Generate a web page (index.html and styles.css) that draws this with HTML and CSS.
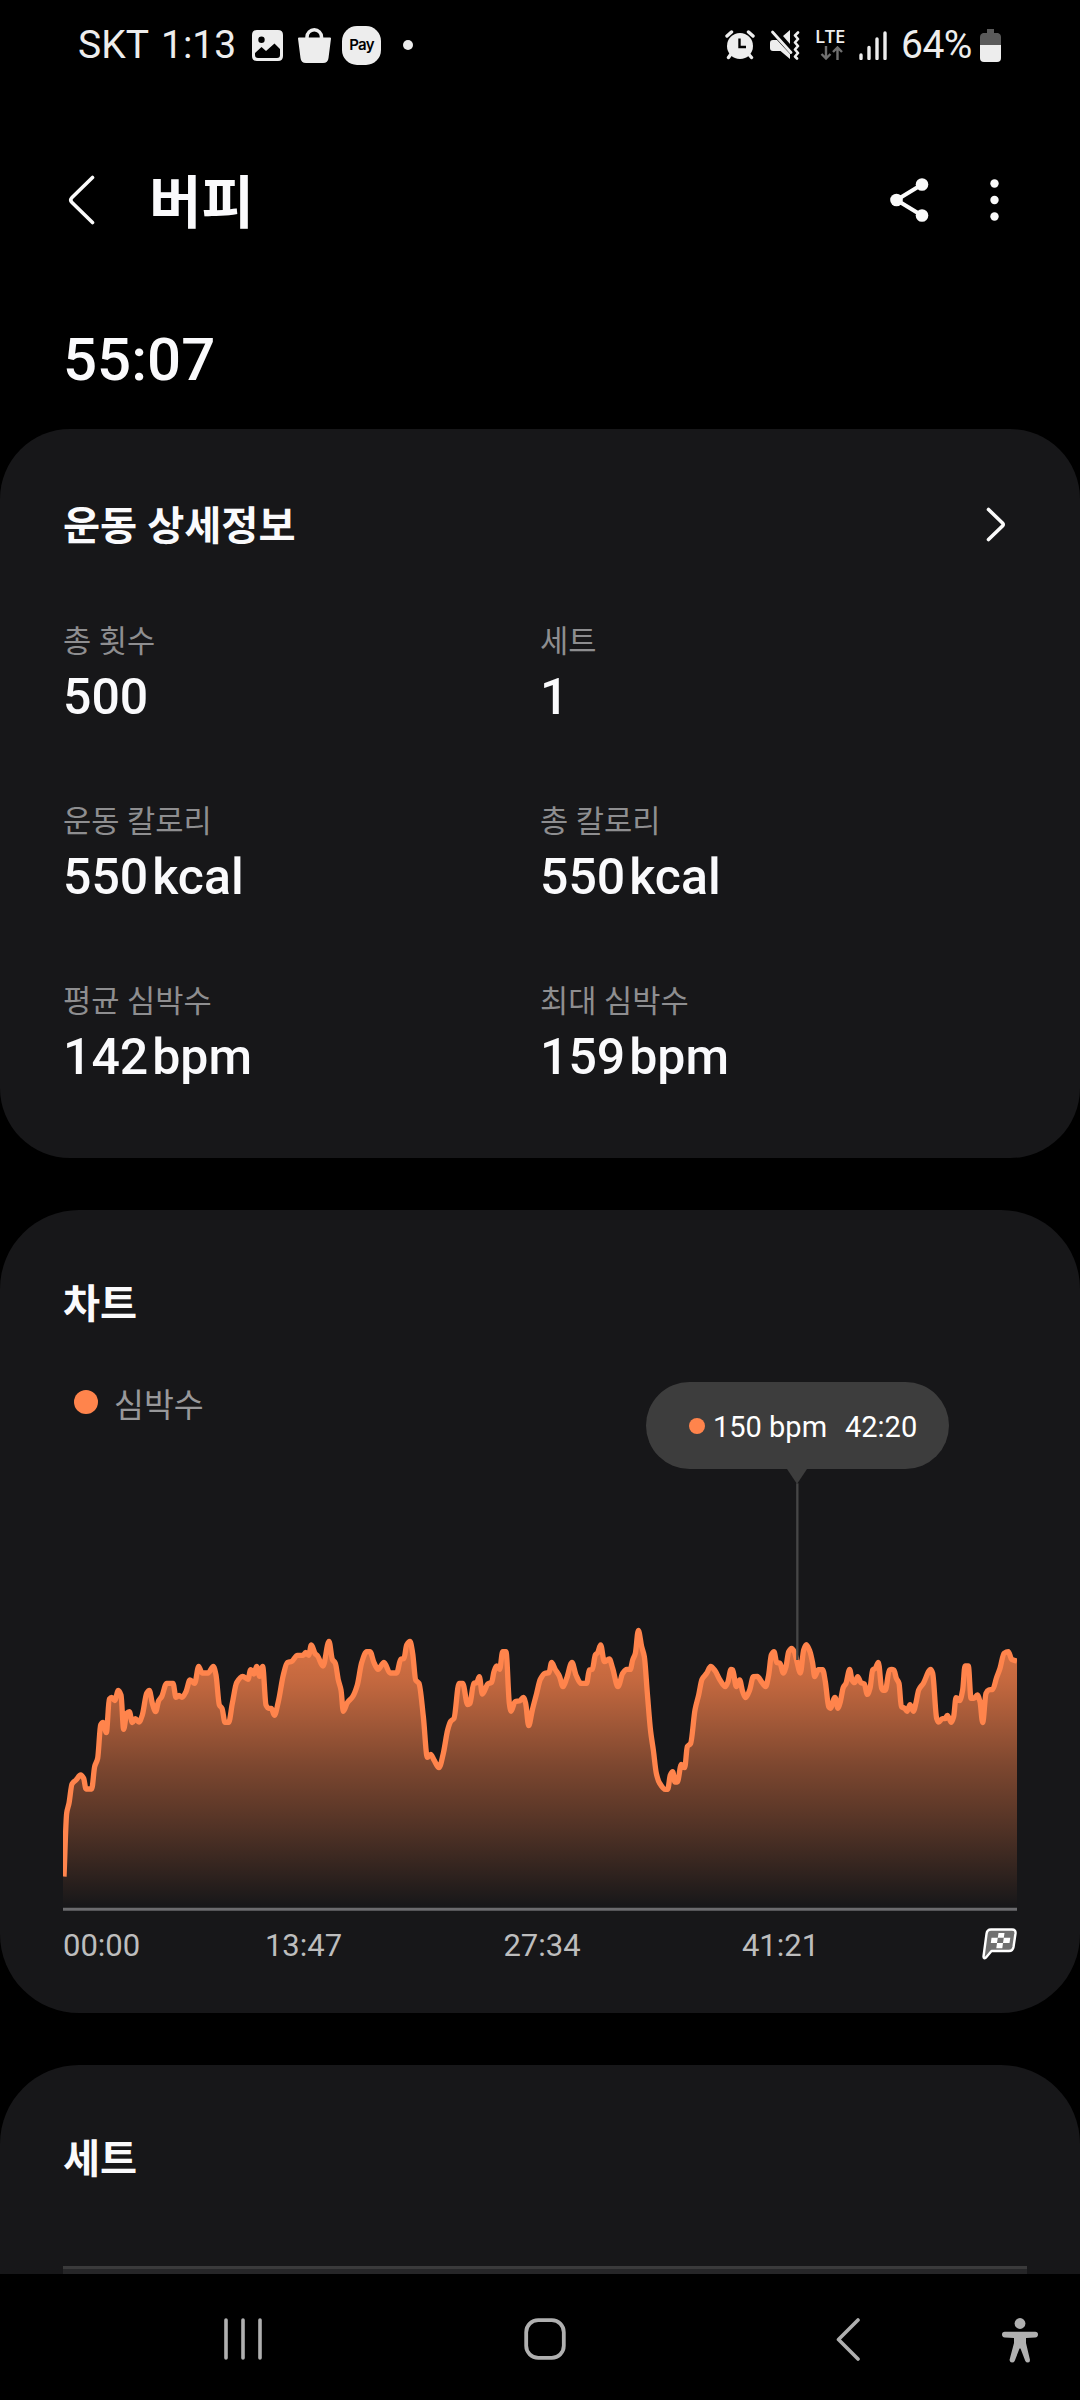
FILE: index.html
```html
<!DOCTYPE html>
<html lang="ko">
<head>
<meta charset="utf-8">
<title>버피</title>
<link rel="stylesheet" href="styles.css">
</head>
<body>
<div class="screen">
  <header class="status">
    <span class="status-text carrier">SKT</span>
    <span class="status-text clock">1:13</span>
    <svg class="st-image" width="31" height="31" viewBox="0 0 31 31"><path fill="#ededed" fill-rule="evenodd" d="M5 0H26Q31 0 31 5V26Q31 31 26 31H5Q0 31 0 26V5Q0 0 5 0ZM9.5 6.5A3.2 3.2 0 1 0 9.500 12.900A3.200 3.200 0 1 0 9.500 6.500ZM3 23V25Q3 28 6 28H25Q28 28 28 25V19L22.500 13.500L14 21L9.500 17Z"/></svg>
    <svg class="st-bag" width="33" height="35" viewBox="0 0 33 35"><path fill="none" stroke="#ededed" stroke-width="3.500" d="M9 12V9A7.200 7.200 0 0 1 23.500 9V12"/><path fill="#ededed" d="M1 9.500H32Q33 9.500 33 10.500L30.500 30Q30 35 25 35H8Q3 35 2.500 30L0 10.500Q0 9.500 1 9.500Z"/></svg>
    <span class="st-pay">Pay</span>
    <span class="st-dot"></span>
    <span class="spacer"></span>
    <svg class="st-alarm" width="30" height="30" viewBox="0 0 30 30"><g stroke="#ededed" stroke-width="3.400" stroke-linecap="round"><path d="M2 6L6.500 2M23.500 2L28 6M6 24L3.500 27.500M23.500 24L26.500 27.500"/></g><circle cx="15" cy="16" r="13" fill="#ededed"/><path d="M14.500 8.500V17H21" fill="none" stroke="#000" stroke-width="2.400"/></svg>
    <svg class="st-mute" width="30" height="30" viewBox="0 0 30 30"><path fill="#ededed" d="M3 10H7L20 24V29L10.500 21H3Q0 21 0 18V13Q0 10 3 10ZM13 6L20 0V14Z"/><path d="M2.500 2L21 22.500" stroke="#ededed" stroke-width="2.800" stroke-linecap="round"/><path d="M28 2.500L25 5.500L28 9L25 12.500L28 16L25 19.500L28 23L25 26.500L27 28.500" fill="none" stroke="#ededed" stroke-width="2.600" stroke-linecap="round" stroke-linejoin="round"/></svg>
    <span class="st-lte"><b>LTE</b><svg width="24" height="14" viewBox="0 0 24 14"><path d="M6 0V12M1.500 8L6 12.500L10.500 8M17.500 14V2M13 6L17.500 1.500L22 6" fill="none" stroke="#707070" stroke-width="2.400"/></svg></span>
    <svg class="st-signal" width="28" height="29" viewBox="0 0 28 29"><path d="M2 24V27.500M10 16.500V27.500M18 8V27.500M26 2V27.500" stroke="#ededed" stroke-width="3.400" stroke-linecap="round"/></svg>
    <span class="status-text battery-text">64%</span>
    <svg class="st-battery" width="21" height="33" viewBox="0 0 21 33"><path fill="#5a5a5a" d="M7 0H14V4H18Q21 5 21 8V16H0V8Q0 5 3 4H7Z"/><path fill="#ededed" d="M0 16H21V29Q21 33 17 33H4Q0 33 0 29Z"/></svg>
  </header>

  <div class="toolbar">
    <svg class="tb-back" width="27" height="50" viewBox="0 0 27 50"><path d="M24.500 2.500L4 22.500Q1.500 25 4 27.500L24.500 47.500" fill="none" stroke="#fafafa" stroke-width="3.600" stroke-linecap="round"/></svg>
    <h1 class="title">버피</h1>
    <span class="spacer"></span>
    <svg class="tb-share" width="39" height="44" viewBox="0 0 39 44"><path d="M32 6.500L6.500 22L32 37.500" fill="none" stroke="#fafafa" stroke-width="4"/><g fill="#fafafa"><circle cx="32" cy="6.500" r="6.300"/><circle cx="6.500" cy="22" r="6.300"/><circle cx="32" cy="37.500" r="6.300"/></g></svg>
    <svg class="tb-more" width="9" height="42" viewBox="0 0 9 42"><g fill="#fafafa"><circle cx="4.500" cy="4.500" r="4.200"/><circle cx="4.500" cy="21" r="4.200"/><circle cx="4.500" cy="37.500" r="4.200"/></g></svg>
  </div>

  <div class="duration">55:07</div>

  <main class="cards">
    <section class="card card-details">
      <div class="card-head">
        <h2>운동 상세정보</h2>
        <svg width="20" height="35" viewBox="0 0 20 35"><path d="M2.500 2.500L16.500 16Q18 17.500 16.500 19L2.500 32.500" fill="none" stroke="#fafafa" stroke-width="3.600" stroke-linecap="round"/></svg>
      </div>
      <dl class="stats">
        <div class="stat"><dt>총 횟수</dt><dd>500</dd></div>
        <div class="stat"><dt>세트</dt><dd>1</dd></div>
        <div class="stat"><dt>운동 칼로리</dt><dd>550<span class="unit">kcal</span></dd></div>
        <div class="stat"><dt>총 칼로리</dt><dd>550<span class="unit">kcal</span></dd></div>
        <div class="stat"><dt>평균 심박수</dt><dd>142<span class="unit">bpm</span></dd></div>
        <div class="stat"><dt>최대 심박수</dt><dd>159<span class="unit">bpm</span></dd></div>
      </dl>
    </section>

    <section class="card card-chart">
      <div class="card-head"><h2>차트</h2></div>
      <div class="legend"><span class="legend-dot"></span>심박수</div>
      <div class="plot">
        <svg class="plot-svg" width="954" height="530" viewBox="0 -654 2862 1590">
          <defs>
            <linearGradient id="heat" gradientUnits="userSpaceOnUse" x1="0" y1="90" x2="0" y2="920">
              <stop offset="0" stop-color="#ff844c" stop-opacity=".87"/>
              <stop offset=".19" stop-color="#ff844c" stop-opacity=".74"/>
              <stop offset=".49" stop-color="#ff844c" stop-opacity=".44"/>
              <stop offset=".73" stop-color="#ff844c" stop-opacity=".24"/>
              <stop offset="1" stop-color="#ff844c" stop-opacity="0"/>
            </linearGradient>
          </defs>
          <path id="area" fill="url(#heat)"/>
          <path id="line" fill="none" stroke="#ff844c" stroke-width="16" stroke-linejoin="round"/>
          <path d="M2203 -350V180" stroke="#464646" stroke-width="7"/>
          <path d="M0 927.500H2862" stroke="#6b6b6e" stroke-width="9"/>
        </svg>
        <div class="tooltip"><span class="tooltip-dot"></span><span class="tooltip-value">150 bpm</span><span>42:20</span></div>
      </div>
      <div class="axis">
        <span>00:00</span><span>13:47</span><span>27:34</span><span>41:21</span>
        <svg width="35" height="33" viewBox="0 0 35 33"><path d="M9 1.500H30Q34 1.500 33.500 5.500L31.500 19Q30.800 23 27 23H9.500L4 29.500Q1.500 31.500 1.500 28.500L4.500 6Q5 1.500 9 1.500Z" fill="#707070" stroke="#fff" stroke-width="2.400" stroke-linejoin="round"/><g fill="#fff"><path d="M16.500 5H22.500L21.800 9.800H15.800ZM9.500 9.800H15.800L15 15H8.800ZM21.800 9.800H28.300L27.500 15H21ZM15 15H21L20.300 20.300H14.300Z"/></g></svg>
      </div>
    </section>

    <section class="card card-sets">
      <div class="card-head"><h2>세트</h2></div>
      <div class="table-top"></div>
    </section>
  </main>

  <nav class="navbar">
    <svg width="38" height="42" viewBox="0 0 38 42"><path d="M2 2V40M19 2V40M36 2V40" stroke="#b0b0b0" stroke-width="3.600" stroke-linecap="round"/></svg>
    <svg class="nav-home" width="42" height="42" viewBox="0 0 42 42"><rect x="2.200" y="2.200" width="37.600" height="37.600" rx="12" fill="none" stroke="#b0b0b0" stroke-width="3.800"/></svg>
    <svg width="24" height="43" viewBox="0 0 24 43"><path d="M22 2L2.500 21.500L22 41" fill="none" stroke="#b0b0b0" stroke-width="3.600" stroke-linecap="round" stroke-linejoin="round"/></svg>
    <svg class="nav-access" width="36" height="45" viewBox="0 0 36 45"><g fill="#b0b0b0"><circle cx="18" cy="5.500" r="5.400"/><path d="M2.800 13.800H33.200Q36 13.800 36 16.600T33.200 19.400L24 20V25L28 42Q28 44.500 26 44.500T23.300 43L18.500 30.500H17.500L12.700 43Q12 44.500 10 44.500T7.500 42L12 25V20L2.800 19.400Q0 19.400 0 16.600T2.800 13.800Z"/></g></svg>
  </nav>
</div>
<script src="chart.js"></script>
</body>
</html>
```
FILE: styles.css
```css
* { box-sizing: border-box; margin: 0; padding: 0; }
body {
  background: #000;
  color: #fafafc;
  font-family: Roboto, "Noto Sans CJK KR", sans-serif;
}
svg { display: block; flex: none; }
.screen {
  width: 1080px;
  height: 2400px;
  display: flex;
  flex-direction: column;
  overflow: hidden;
}
.spacer { flex: 1; }

/* Status bar */
.status {
  flex: none;
  height: 90px;
  padding: 0 79px 0 78px;
  display: flex;
  align-items: center;
  color: #ededed;
}
.status-text { font-size: 39px; line-height: 44px; white-space: nowrap; }
.carrier { width: 83px; }
.clock { width: 91px; }
.st-bag { margin-left: 15px; }
.st-pay {
  margin-left: 11px;
  width: 39px;
  height: 39px;
  border-radius: 15px;
  background: #ededed;
  color: #000;
  font: 600 15px/38px Inter, Roboto, sans-serif;
  letter-spacing: -.7px;
  text-align: center;
}
.st-dot { width: 10px; height: 10px; margin-left: 22px; border-radius: 50%; background: #ededed; }
.st-mute { margin-left: 15px; }
.st-lte { width: 32px; height: 32px; margin-left: 15px; display: flex; flex-direction: column; gap: 3px; }
.st-lte b { font: 600 18.500px/14px "Open Sans", sans-serif; letter-spacing: -.3px; }
.st-lte svg { margin-left: 5px; }
.st-signal { margin-left: 12px; }
.battery-text { margin-left: 14px; width: 79px; letter-spacing: -.5px; }

/* Title bar */
.toolbar {
  flex: none;
  height: 222px;
  padding: 0 81px 2px 68px;
  display: flex;
  align-items: center;
}
.title { margin-left: 54px; font-size: 57px; font-weight: 700; line-height: 80px; padding-top: 8px; }
.tb-more { margin-left: 61px; }

.duration {
  flex: none;
  height: 117px;
  padding: 8px 63px 0;
  font-size: 60px;
  font-weight: 500;
  line-height: 80px;
}

/* Cards */
.cards {
  flex: 1;
  min-height: 0;
  overflow: hidden;
  display: flex;
  flex-direction: column;
  gap: 52px;
}
.card { flex: none; background: #171719; border-radius: 79px; padding: 65px 63px 0; }
.card-details { height: 729px; padding-top: 68px; border-radius: 70px; }
.card-chart { height: 803px; }
.card-sets { height: 480px; }
.card-head {
  height: 60px;
  padding-right: 11px;
  display: flex;
  align-items: center;
  justify-content: space-between;
}
.card-head h2 { font-size: 40.300px; font-weight: 700; line-height: 60px; }
.card-head svg { margin-bottom: 6px; }

.stats { display: grid; grid-template-columns: 477px 477px; grid-auto-rows: 180px; margin-top: 63px; }
.stat dt { font-size: 30.700px; line-height: 44px; color: #8e8e90; }
.stat dd { font-size: 50px; font-weight: 500; line-height: 60px; margin-top: 3px; }
.unit { margin-left: 4px; }

/* Heart-rate chart */
.legend {
  height: 40px;
  margin-top: 47px;
  padding-left: 11px;
  display: flex;
  align-items: center;
  gap: 16px;
  font-size: 32.500px;
  color: #98989a;
}
.legend-dot { width: 24px; height: 24px; border-radius: 50%; background: #ff844c; }
.plot { position: relative; height: 530px; margin-top: -40px; }
.tooltip {
  position: absolute;
  left: 583px;
  top: 0;
  width: 303px;
  height: 87px;
  padding: 2px 0 0 43px;
  border-radius: 43.500px;
  background: #3d3d3d;
  color: #fff;
  display: flex;
  align-items: center;
  font-size: 29px;
  white-space: nowrap;
}
.tooltip::after {
  content: "";
  position: absolute;
  left: 141px;
  top: 86.500px;
  border: solid transparent;
  border-width: 15px 10.500px 0;
  border-top-color: #3d3d3d;
}
.tooltip-dot { width: 16px; height: 16px; margin: 0 8px 2px 0; border-radius: 50%; background: #ff844c; }
.tooltip-value { width: 132px; }
.axis {
  height: 67px;
  display: grid;
  grid-template-columns: 121.250px repeat(3, 238.500px) 1fr;
  align-items: center;
  font-size: 31px;
  color: #bdbdbd;
}
.axis span:not(:first-child) { text-align: center; }
.axis svg { justify-self: end; margin-bottom: 2px; }

.table-top { width: 964px; height: 60px; margin-top: 76px; background: #262628; border-top: 3px solid #3a3a3b; }

/* System navigation */
.navbar {
  flex: none;
  height: 126px;
  padding: 4px 0 0 92px;
  display: grid;
  grid-template-columns: repeat(3, 302.500px) 42px;
  align-items: center;
  justify-items: center;
}
.nav-home { margin-right: 2px; }
.nav-access { margin: 2px 2px 0 0; }
```
FILE: chart.js
```js
// Heart-rate samples as x,y pairs in plot units.
const samples = [
  3,830, 11,640, 18,610, 27,552, 39,540, 53,525, 62,535, 69,567, 86,567, 95,500, 104,475, 113,375, 120,367, 130,398,
  139,297, 146,292, 155,302, 166,271, 174,285, 182,388, 191,340, 199,335, 208,368, 217,356, 228,366, 238,345, 251,280,
  259,271, 268,310, 278,335, 287,302, 296,290, 311,250, 330,250, 339,292, 348,286, 357,292, 369,275, 381,240, 395,250,
  407,199, 417,219, 435,219, 451,199, 459,225, 469,315, 477,325, 486,367, 497,367, 508,310, 521,248, 539,229, 555,238,
  563,209, 573,222, 581,199, 590,229, 599,199, 609,315, 617,325, 625,325, 634,346, 646,305, 661,225, 673,188, 686,184,
  703,166, 721,166, 728,157, 737,166, 745,135, 756,160, 764,168, 780,198, 798,124, 808,178, 817,190, 826,240, 834,270,
  841,334, 853,308, 869,290, 883,255, 896,188, 911,155, 921,155, 933,188, 945,208, 963,187,
  981,219, 1001,219, 1013,178, 1023,175, 1031,135, 1041,124, 1049,160, 1058,240, 1068,250, 1081,350, 1093,472, 1103,463,
  1113,480, 1128,503, 1141,460, 1154,390, 1163,364, 1173,355, 1188,250, 1199,250, 1214,314, 1221,310, 1232,250, 1241,248,
  1249,230, 1258,282, 1275,251, 1286,247, 1293,215, 1301,198, 1310,208, 1319,155, 1329,155, 1339,310, 1344,334, 1356,305,
  1371,302, 1381,292, 1388,310, 1397,377, 1408,330, 1421,280, 1432,238, 1446,220, 1458,218, 1466,187, 1476,207, 1489,228,
  1500,260, 1511,235, 1527,187, 1539,225, 1554,250, 1571,250, 1579,210, 1588,208, 1597,165, 1604,158, 1613,135, 1624,185,
  1639,177, 1649,205, 1665,260, 1679,220, 1691,208, 1702,208, 1709,180, 1717,160, 1726,91, 1736,140, 1744,170, 1753,280,
  1763,395, 1771,450, 1780,520, 1789,548, 1807,568, 1814,568, 1822,525, 1829,515, 1836,546, 1843,546, 1855,493, 1865,503,
  1873,440, 1883,430, 1896,330, 1907,285, 1917,238, 1931,220, 1943,199, 1956,212, 1971,240, 1987,260,
  1995,245, 2004,208, 2009,210, 2020,260, 2030,240, 2039,275, 2048,293, 2060,270, 2071,230, 2083,229, 2096,246, 2108,260,
  2117,225, 2125,165, 2133,155, 2141,187, 2151,190, 2161,219, 2169,200, 2177,155, 2186,145, 2194,155, 2202,185, 2212,219,
  2222,150, 2230,134, 2241,155, 2249,190, 2255,230, 2266,209, 2279,209, 2287,245, 2297,320, 2302,325, 2316,292, 2325,325,
  2332,305, 2341,262, 2349,250, 2360,208, 2367,240, 2375,248, 2384,230, 2394,248, 2404,252, 2413,283, 2421,265, 2429,210,
  2437,205, 2446,187, 2456,265, 2461,271, 2467,271, 2479,210, 2486,208, 2493,210, 2500,235, 2508,250, 2515,320, 2525,325,
  2532,334, 2541,314, 2551,334, 2559,308, 2567,270, 2581,250, 2603,208, 2609,220, 2621,355, 2627,366, 2638,356, 2646,356,
  2653,346, 2665,367, 2672,350, 2679,293, 2690,302, 2699,270, 2706,198, 2716,198, 2724,295, 2733,295, 2743,285, 2751,305,
  2759,368, 2769,280, 2777,270, 2789,268, 2801,232, 2811,205, 2823,160, 2836,155, 2846,178, 2862,183
];

const points = [];
for (let i = 0; i < samples.length; i += 2) points.push([samples[i], samples[i + 1]]);

// Monotone cubic slopes keep the curve from overshooting its samples.
const slope = (a, b) => (b[1] - a[1]) / (b[0] - a[0]);
const tangents = points.map((p, i) => {
  if (i === 0) return slope(p, points[1]);
  if (i === points.length - 1) return slope(points[i - 1], p);
  const left = slope(points[i - 1], p);
  const right = slope(p, points[i + 1]);
  return left * right <= 0 ? 0 : 2 * left * right / (left + right);
});

let curve = `M${points[0]}`;
for (let i = 1; i < points.length; i++) {
  const [x0, y0] = points[i - 1];
  const [x1, y1] = points[i];
  const h = (x1 - x0) / 3;
  curve += `C${x0 + h},${y0 + h * tangents[i - 1]} ${x1 - h},${y1 - h * tangents[i]} ${x1},${y1}`;
}

document.getElementById('line').setAttribute('d', curve);
document.getElementById('area').setAttribute('d', `${curve}V923H0V830Z`);
```
